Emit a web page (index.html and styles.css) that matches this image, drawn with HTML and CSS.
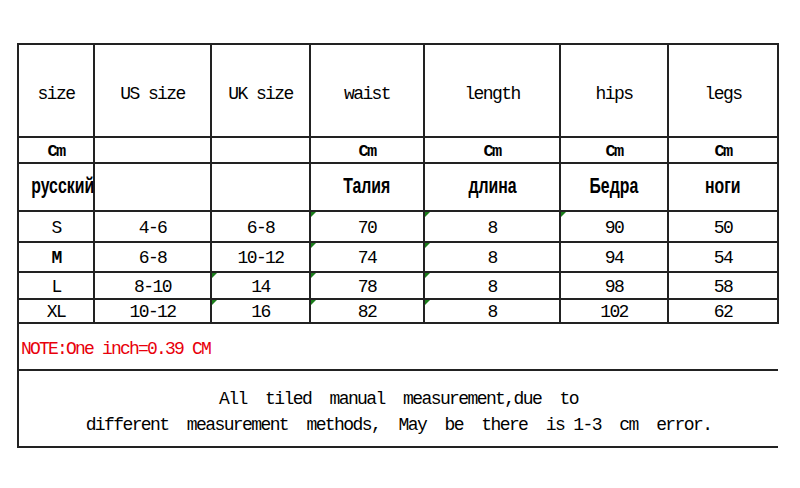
FILE: index.html
```html
<!DOCTYPE html>
<html>
<head>
<meta charset="utf-8">
<link rel="stylesheet" href="styles.css">
</head>
<body>
<div class="page">
<table class="chart">
<colgroup>
<col class="c1"><col class="c2"><col class="c3"><col class="c4"><col class="c5"><col class="c6"><col class="c7">
</colgroup>
<tr class="r-head">
<td>size</td><td>US size</td><td>UK size</td><td>waist</td><td>length</td><td>hips</td><td>legs</td>
</tr>
<tr class="r-unit">
<td>Cm</td><td></td><td></td><td>Cm</td><td>Cm</td><td>Cm</td><td>Cm</td>
</tr>
<tr class="r-ru">
<td><span class="nar">русский</span></td><td></td><td></td><td><span class="nar">Талия</span></td><td><span class="nar">длина</span></td><td><span class="nar">Бедра</span></td><td><span class="nar">ноги</span></td>
</tr>
<tr class="r-data r-s">
<td>S</td><td>4-6</td><td>6-8</td><td class="mark">70</td><td class="mark">8</td><td class="mark">90</td><td>50</td>
</tr>
<tr class="r-data r-m">
<td class="b">M</td><td>6-8</td><td>10-12</td><td class="mark">74</td><td class="mark">8</td><td>94</td><td>54</td>
</tr>
<tr class="r-data r-l">
<td>L</td><td>8-10</td><td class="mark">14</td><td class="mark">78</td><td class="mark">8</td><td>98</td><td>58</td>
</tr>
<tr class="r-data r-xl">
<td>XL</td><td>10-12</td><td class="mark">16</td><td class="mark">82</td><td class="mark">8</td><td>102</td><td>62</td>
</tr>
<tr class="r-note">
<td colspan="7">NOTE:One inch=0.39 CM</td>
</tr>
<tr class="r-foot">
<td colspan="7"><div class="foot">All  tiled  manual  measurement,due  to
different  measurement  methods,  May  be  there  is 1-3  cm  error.</div></td>
</tr>
</table>
</div>
</body>
</html>
```
FILE: styles.css
```css
html, body {
  margin: 0;
  padding: 0;
  background: #fff;
}
.page {
  width: 800px;
  height: 488px;
  padding: 43px 0 0 17px;
  box-sizing: border-box;
}
.chart {
  border-collapse: collapse;
  table-layout: fixed;
  width: 762px;
  font-family: "Liberation Mono", "DejaVu Sans Mono", monospace;
  font-size: 18px;
  letter-spacing: -1.6px;
  color: #000;
}
.c1 { width: 76px; }
.c2 { width: 117px; }
.c3 { width: 99px; }
.c4 { width: 114px; }
.c5 { width: 136px; }
.c6 { width: 108px; }
.c7 { width: 110px; }
.chart td {
  border: 2px solid #222;
  text-align: center;
  vertical-align: middle;
  padding: 0;
  position: relative;
  line-height: 1;
}
.r-head td { height: 85px; padding-top: 6px; }
.r-unit td { height: 22px; font-weight: bold; font-size: 17px; vertical-align: bottom; padding-bottom: 2px; }
.r-ru td {
  height: 44px;
  padding-bottom: 2px;
  font-family: "Liberation Sans", Arial, sans-serif;
  font-weight: bold;
  font-size: 22px;
  letter-spacing: 0;
}
.nar {
  display: inline-block;
  transform: scaleX(0.72);
  white-space: nowrap;
}
.r-data td { padding-top: 2px; }
.r-s td { height: 27px; }
.r-m td { height: 26px; }
.r-l td { height: 23px; }
.r-xl td { height: 20px; }
.b { font-weight: bold; }
.mark::before {
  content: "";
  position: absolute;
  left: 0;
  top: 0;
  width: 0;
  height: 0;
  border-top: 5px solid #1b7d1b;
  border-right: 5px solid transparent;
}
.r-note td {
  height: 40px;
  padding-top: 5px;
  text-align: left;
  color: #e8000b;
  padding-left: 2px;
  letter-spacing: -1.8px;
  border-right: none;
}
.r-foot td {
  height: 75px;
  border-right: none;
}
.foot {
  white-space: pre;
  line-height: 26px;
  text-align: center;
  padding-top: 7px;
}
```
